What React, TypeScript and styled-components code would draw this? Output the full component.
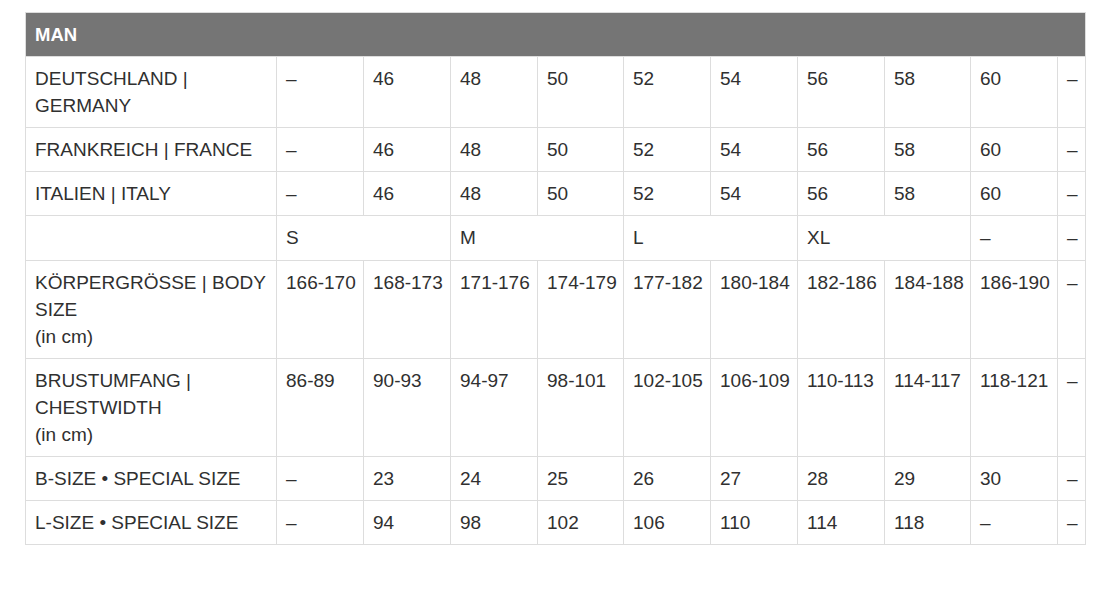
import styled, { createGlobalStyle } from 'styled-components';

const GlobalStyle = createGlobalStyle`
  body {
    margin: 0;
    background: #ffffff;
    font-family: 'Liberation Sans', Arial, sans-serif;
  }
`;

const Page = styled.div`
  padding: 12px 0 40px 25px;
`;

const SizeTable = styled.table`
  width: 1061px;
  border-collapse: collapse;
  table-layout: fixed;
  font-family: 'Liberation Sans', Arial, sans-serif;
  font-size: 19px;
  line-height: 27.1px;
  color: #303030;
`;

const Col = styled.col<{ $w: number }>`
  width: ${(p) => p.$w}px;
`;

const HeadCell = styled.th`
  background-color: #757575;
  color: #ffffff;
  font-weight: 700;
  font-size: 18.5px;
  text-align: left;
  padding: 8px 9px;
  border: 1px solid #dddddd;
`;

const Cell = styled.td`
  border: 1px solid #dddddd;
  padding: 8px 6px 8px 9px;
  vertical-align: top;
  white-space: nowrap;
  overflow: hidden;
`;

type Row = { label: string[]; values: (string | [string, number])[] };

const DASH = '–';

const rows: Row[] = [
  {
    label: ['DEUTSCHLAND |', 'GERMANY'],
    values: [DASH, '46', '48', '50', '52', '54', '56', '58', '60', DASH],
  },
  {
    label: ['FRANKREICH | FRANCE'],
    values: [DASH, '46', '48', '50', '52', '54', '56', '58', '60', DASH],
  },
  {
    label: ['ITALIEN | ITALY'],
    values: [DASH, '46', '48', '50', '52', '54', '56', '58', '60', DASH],
  },
  {
    label: [''],
    values: [['S', 2], ['M', 2], ['L', 2], ['XL', 2], DASH, DASH],
  },
  {
    label: ['KÖRPERGRÖSSE | BODY', 'SIZE', '(in cm)'],
    values: [
      '166-170',
      '168-173',
      '171-176',
      '174-179',
      '177-182',
      '180-184',
      '182-186',
      '184-188',
      '186-190',
      DASH,
    ],
  },
  {
    label: ['BRUSTUMFANG |', 'CHESTWIDTH', '(in cm)'],
    values: [
      '86-89',
      '90-93',
      '94-97',
      '98-101',
      '102-105',
      '106-109',
      '110-113',
      '114-117',
      '118-121',
      DASH,
    ],
  },
  {
    label: ['B-SIZE • SPECIAL SIZE'],
    values: [DASH, '23', '24', '25', '26', '27', '28', '29', '30', DASH],
  },
  {
    label: ['L-SIZE • SPECIAL SIZE'],
    values: [DASH, '94', '98', '102', '106', '110', '114', '118', DASH, DASH],
  },
];

const widths = [251, 87, 87, 87, 86, 87, 87, 87, 86, 87, 28];

export default function App() {
  return (
    <>
      <GlobalStyle />
      <Page>
        <SizeTable>
          <colgroup>
            {widths.map((w, i) => (
              <Col key={i} $w={w} />
            ))}
          </colgroup>
          <thead>
            <tr>
              <HeadCell colSpan={11}>MAN</HeadCell>
            </tr>
          </thead>
          <tbody>
            {rows.map((row, r) => (
              <tr key={r}>
                <Cell>
                  {row.label.map((line, i) => (
                    <span key={i}>
                      {i > 0 && <br />}
                      {line}
                    </span>
                  ))}
                </Cell>
                {row.values.map((v, i) =>
                  Array.isArray(v) ? (
                    <Cell key={i} colSpan={v[1]}>
                      {v[0]}
                    </Cell>
                  ) : (
                    <Cell key={i}>{v}</Cell>
                  )
                )}
              </tr>
            ))}
          </tbody>
        </SizeTable>
      </Page>
    </>
  );
}
